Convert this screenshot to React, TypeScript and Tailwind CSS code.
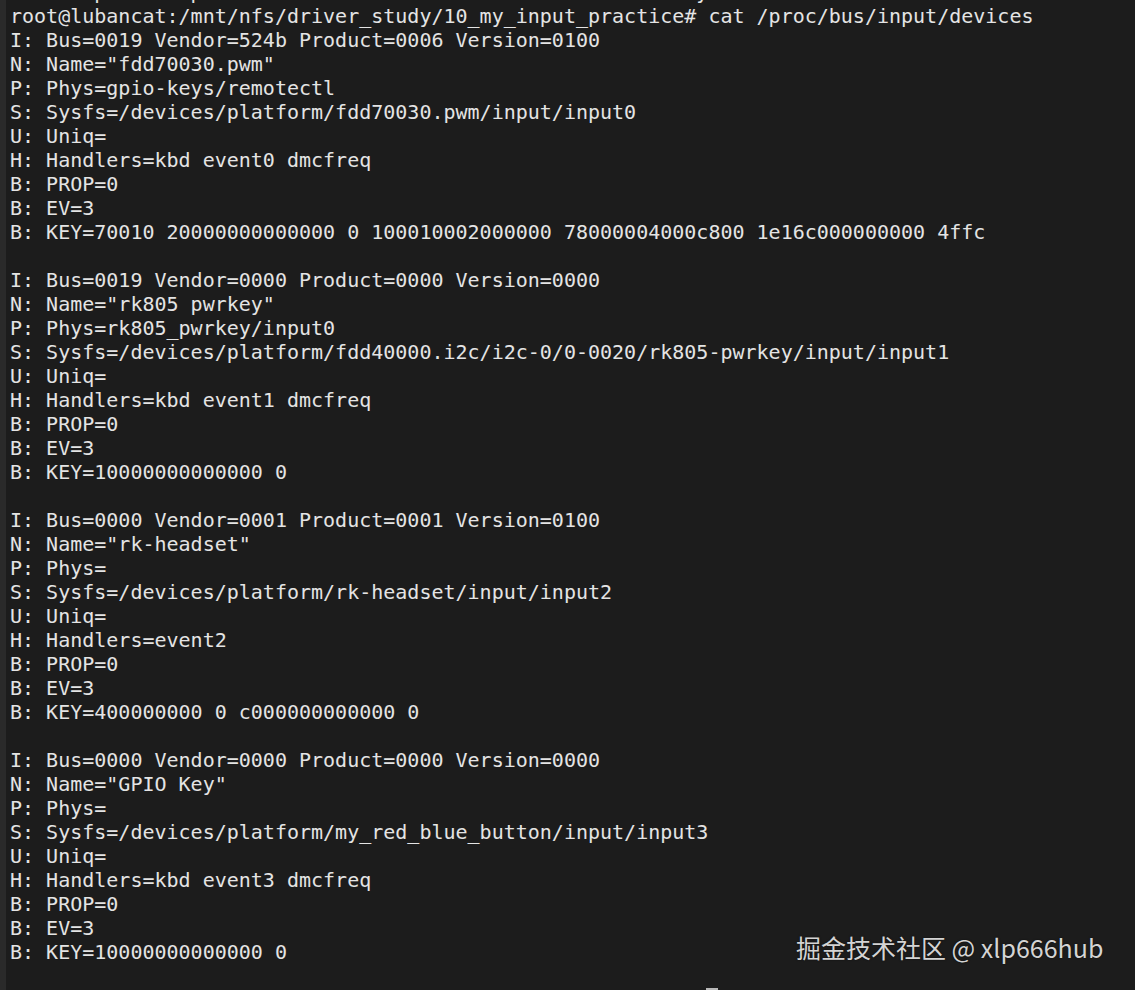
const devices = [
  [
    "I: Bus=0019 Vendor=524b Product=0006 Version=0100",
    'N: Name="fdd70030.pwm"',
    "P: Phys=gpio-keys/remotectl",
    "S: Sysfs=/devices/platform/fdd70030.pwm/input/input0",
    "U: Uniq=",
    "H: Handlers=kbd event0 dmcfreq",
    "B: PROP=0",
    "B: EV=3",
    "B: KEY=70010 20000000000000 0 100010002000000 78000004000c800 1e16c000000000 4ffc",
  ],
  [
    "I: Bus=0019 Vendor=0000 Product=0000 Version=0000",
    'N: Name="rk805 pwrkey"',
    "P: Phys=rk805_pwrkey/input0",
    "S: Sysfs=/devices/platform/fdd40000.i2c/i2c-0/0-0020/rk805-pwrkey/input/input1",
    "U: Uniq=",
    "H: Handlers=kbd event1 dmcfreq",
    "B: PROP=0",
    "B: EV=3",
    "B: KEY=10000000000000 0",
  ],
  [
    "I: Bus=0000 Vendor=0001 Product=0001 Version=0100",
    'N: Name="rk-headset"',
    "P: Phys=",
    "S: Sysfs=/devices/platform/rk-headset/input/input2",
    "U: Uniq=",
    "H: Handlers=event2",
    "B: PROP=0",
    "B: EV=3",
    "B: KEY=400000000 0 c000000000000 0",
  ],
  [
    "I: Bus=0000 Vendor=0000 Product=0000 Version=0000",
    'N: Name="GPIO Key"',
    "P: Phys=",
    "S: Sysfs=/devices/platform/my_red_blue_button/input/input3",
    "U: Uniq=",
    "H: Handlers=kbd event3 dmcfreq",
    "B: PROP=0",
    "B: EV=3",
    "B: KEY=10000000000000 0",
  ],
];

export default function App() {
  const lines: string[] = ["root@lubancat:/mnt/nfs/driver_study/10_my_input_practice# cat /proc/bus/input/devices"];
  devices.forEach((d, i) => {
    if (i > 0) lines.push("");
    lines.push(...d);
  });

  return (
    <div className="relative flex w-[1135px] h-[990px] overflow-hidden bg-[#1c1c1c]">
      <div className="w-[6px] shrink-0 bg-[#2a2a2a]" />
      <div
        className="flex-1 pl-[4px] pt-[4px] text-[20px] leading-[24px] text-[#e4e4e4] whitespace-pre"
        style={{ fontFamily: '"DejaVu Sans Mono", "Liberation Mono", monospace' }}
      >
        <div className="-mt-[24px] h-[24px]">{"      ip       p                                         y"}</div>
        {lines.map((l, i) => (
          <div key={i} className="h-[24px]">
            {l}
          </div>
        ))}
      </div>

      <div className="absolute left-[706px] bottom-0 w-[12px] h-[2px] bg-[#b8b8b8]" />

      <div
        className="absolute left-[796px] top-[930px] text-[25px] leading-[34px] text-[#d4d4d4] whitespace-nowrap"
        style={{ fontFamily: '"Noto Sans CJK SC", "Noto Sans", sans-serif', textShadow: "0 0 2px rgba(0,0,0,0.6)" }}
      >
        掘金技术社区 @ xlp666hub
      </div>
    </div>
  );
}
